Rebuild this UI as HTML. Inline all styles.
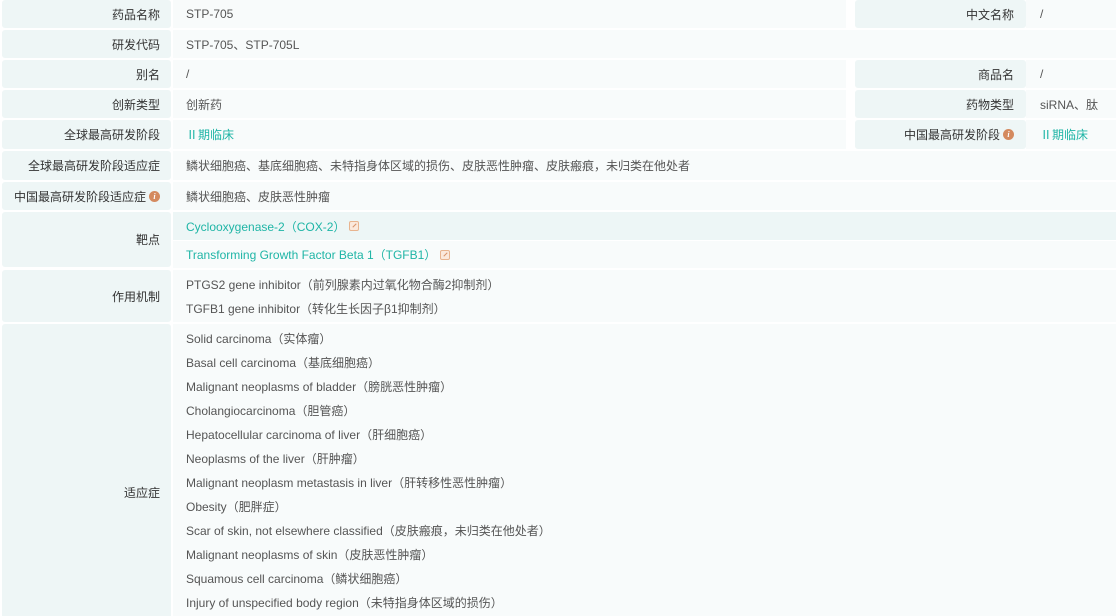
<!DOCTYPE html>
<html style="width:1116px;height:616px;overflow:hidden"><head><meta charset="utf-8"><style>
*{margin:0;padding:0;box-sizing:border-box}
body{width:1116px;height:616px;background:#fff;font-family:"Liberation Sans","Noto Sans CJK SC",sans-serif;font-size:12px;color:#333;position:relative;overflow:hidden}
.l{position:absolute;left:2px;width:169px;background:#eef6f6;border-radius:3px;text-align:right;padding-right:11px;color:#333;display:flex;align-items:center;justify-content:flex-end}
.v{position:absolute;left:173px;background:#f8fbfb;color:#555;padding-left:13px;display:flex;align-items:center}
.rl{position:absolute;left:855px;width:171px;background:#eef6f6;border-radius:3px;padding-right:12px;display:flex;align-items:center;justify-content:flex-end;color:#333}
.rv{position:absolute;left:1026px;width:90px;background:#f8fbfb;padding-left:14px;display:flex;align-items:center;color:#555}
.g{color:#1fb5a6}
.i{display:inline-block;width:11px;height:11px;border-radius:50%;background:#d48a5f;color:#fff;font-size:8px;font-style:italic;font-weight:bold;text-align:center;line-height:11px;margin-left:3px;font-family:"Liberation Serif",serif}
.k{display:inline-block;width:10px;height:10px;border:1px solid #e8b48f;background:#fbe9dc;border-radius:2px;margin-left:4px;vertical-align:-1px;position:relative}
.k:after{content:"";position:absolute;left:2px;top:3px;width:5px;height:1px;background:#d7946b;transform:rotate(-45deg)}
.ln{position:absolute;left:186px;color:#555;line-height:24px}
</style></head><body>
<div class="l" style="top:0;height:28px">药品名称</div>
<div class="v" style="top:0;height:28px;width:673px">STP-705</div>
<div class="rl" style="top:0;height:28px">中文名称</div>
<div class="rv" style="top:0;height:28px">/</div>

<div class="l" style="top:30px;height:28px">研发代码</div>
<div class="v" style="top:30px;height:28px;width:943px">STP-705、STP-705L</div>

<div class="l" style="top:60px;height:28px">别名</div>
<div class="v" style="top:60px;height:28px;width:673px">/</div>
<div class="rl" style="top:60px;height:28px">商品名</div>
<div class="rv" style="top:60px;height:28px">/</div>

<div class="l" style="top:90px;height:28px">创新类型</div>
<div class="v" style="top:90px;height:28px;width:673px">创新药</div>
<div class="rl" style="top:90px;height:28px">药物类型</div>
<div class="rv" style="top:90px;height:28px">siRNA、肽</div>

<div class="l" style="top:120px;height:29px">全球最高研发阶段</div>
<div class="v g" style="top:120px;height:29px;width:673px">Ⅱ期临床</div>
<div class="rl" style="top:120px;height:29px">中国最高研发阶段<span class="i">i</span></div>
<div class="rv g" style="top:120px;height:29px">Ⅱ期临床</div>

<div class="l" style="top:151px;height:29px">全球最高研发阶段适应症</div>
<div class="v" style="top:151px;height:29px;width:943px">鳞状细胞癌、基底细胞癌、未特指身体区域的损伤、皮肤恶性肿瘤、皮肤瘢痕，未归类在他处者</div>

<div class="l" style="top:182px;height:28px">中国最高研发阶段适应症<span class="i">i</span></div>
<div class="v" style="top:182px;height:28px;width:943px">鳞状细胞癌、皮肤恶性肿瘤</div>

<div class="l" style="top:212px;height:55px">靶点</div>
<div class="v g" style="top:212px;height:28px;width:943px;background:#edf6f6">Cyclooxygenase-2（COX-2）<span class="k"></span></div>
<div class="v g" style="top:241px;height:27px;width:943px">Transforming Growth Factor Beta 1（TGFB1）<span class="k"></span></div>

<div class="l" style="top:270px;height:52px">作用机制</div>
<div class="v" style="top:270px;height:52px;width:943px"></div>
<div class="ln" style="top:273px">PTGS2 gene inhibitor（前列腺素内过氧化物合酶2抑制剂）</div>
<div class="ln" style="top:297px">TGFB1 gene inhibitor（转化生长因子β1抑制剂）</div>

<div class="l" style="top:324px;height:292px;align-items:flex-start;padding-top:160px;border-radius:3px 3px 0 0">适应症</div>
<div class="v" style="top:324px;height:292px;width:943px"></div>
<div class="ln" style="top:327px">Solid carcinoma（实体瘤）</div>
<div class="ln" style="top:351px">Basal cell carcinoma（基底细胞癌）</div>
<div class="ln" style="top:375px">Malignant neoplasms of bladder（膀胱恶性肿瘤）</div>
<div class="ln" style="top:399px">Cholangiocarcinoma（胆管癌）</div>
<div class="ln" style="top:423px">Hepatocellular carcinoma of liver（肝细胞癌）</div>
<div class="ln" style="top:447px">Neoplasms of the liver（肝肿瘤）</div>
<div class="ln" style="top:471px">Malignant neoplasm metastasis in liver（肝转移性恶性肿瘤）</div>
<div class="ln" style="top:495px">Obesity（肥胖症）</div>
<div class="ln" style="top:519px">Scar of skin, not elsewhere classified（皮肤瘢痕，未归类在他处者）</div>
<div class="ln" style="top:543px">Malignant neoplasms of skin（皮肤恶性肿瘤）</div>
<div class="ln" style="top:567px">Squamous cell carcinoma（鳞状细胞癌）</div>
<div class="ln" style="top:591px">Injury of unspecified body region（未特指身体区域的损伤）</div>
</body></html>
